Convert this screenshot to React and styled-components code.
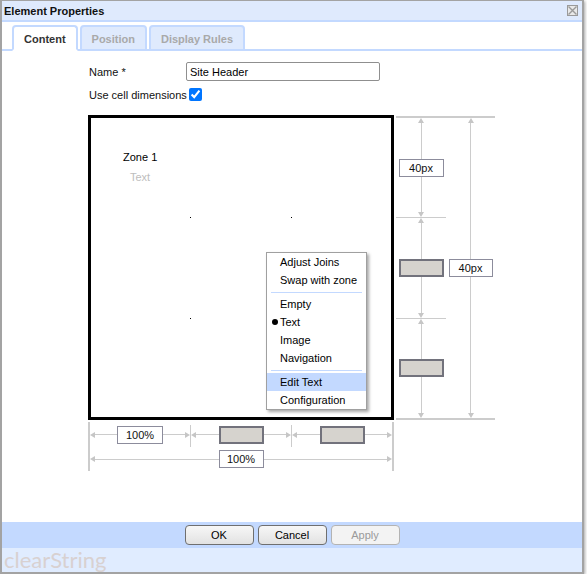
import React from 'react';
import styled, { createGlobalStyle, css } from 'styled-components';

const GlobalStyle = createGlobalStyle`
  html, body {
    margin: 0;
    padding: 0;
    background: #fff;
  }
  body {
    font-family: "Liberation Sans", Arial, sans-serif;
    font-size: 11px;
    color: #000;
  }
  * {
    box-sizing: border-box;
  }
`;

const Dialog = styled.div`
  width: 584px;
  height: 574px;
  display: flex;
  flex-direction: column;
  border: 2px solid #a3a3a3;
  border-top-width: 1px;
  box-shadow: 1px 1px 3px rgba(0, 0, 0, 0.35);
  background: #fff;
`;

const TitleBar = styled.div`
  height: 21px;
  flex: none;
  display: flex;
  align-items: center;
  justify-content: space-between;
  padding: 0 4px 0 2px;
  background: #dfeafd;
  border-bottom: 2px solid #c3d9ff;
  font-weight: bold;
  color: #111;
`;

const TabStrip = styled.div`
  height: 29px;
  flex: none;
  display: flex;
  align-items: flex-end;
  gap: 2px;
  padding-left: 10px;
  border-bottom: 2px solid #c3d9ff;
`;

const Tab = styled.div`
  height: 26px;
  margin-bottom: -2px;
  padding: 1px 10px 0;
  display: flex;
  align-items: center;
  border: 2px solid #c3d9ff;
  border-radius: 4px 4px 0 0;
  font-weight: bold;
  background: #dfeafd;
  color: #a9a9a9;
  ${p =>
    p.$active &&
    css`
      background: #fff;
      border-bottom-color: #fff;
      color: #333;
    `}
`;

const Panel = styled.div`
  flex: 1;
  min-height: 0;
  padding: 11px 0 0 86px;
`;

const Form = styled.div`
  display: grid;
  grid-template-columns: 98px 194px;
  row-gap: 4px;
  align-items: center;
`;

const Label = styled.label`
  padding-left: 1px;
  white-space: nowrap;
  color: #111;
`;

const TextInput = styled.input`
  width: 194px;
  height: 19px;
  border: 1px solid #8f8f8f;
  border-radius: 2px;
  padding: 0 3px;
  font: 11px "Liberation Sans", Arial, sans-serif;
  color: #000;
`;

const Checkbox = styled.input`
  display: block;
  width: 13px;
  height: 13px;
  margin: 3px;
`;

const Editor = styled.div`
  margin-top: 11px;
  display: grid;
  grid-template-columns: 306px 99px;
  grid-template-rows: 305px 49px;
  gap: 2px;
`;

const Canvas = styled.div`
  position: relative;
  border: 3px solid #000;
  padding: 33px 0 0 32px;
  line-height: 13px;
`;

const ZoneTitle = styled.div`
  color: #000;
`;

const ZoneType = styled.div`
  margin: 7px 0 0 7px;
  color: #bdbdbd;
`;

const Dot = styled.span`
  position: absolute;
  left: ${p => p.$x}px;
  top: ${p => p.$y}px;
  width: 1px;
  height: 1px;
  background: #000;
`;

const Menu = styled.div`
  position: absolute;
  left: 175px;
  top: 134px;
  width: 101px;
  border: 1px solid #a0a0a0;
  background: #fff;
  box-shadow: 2px 2px 3px rgba(0, 0, 0, 0.35);
  line-height: 18px;
`;

const MenuItem = styled.div`
  position: relative;
  height: 18px;
  padding-left: 13px;
  white-space: nowrap;
  background: ${p => (p.$highlight ? '#c3d9ff' : 'transparent')};
  ${p =>
    p.$checked &&
    css`
      &::before {
        content: '';
        position: absolute;
        left: 5px;
        top: 6px;
        width: 6px;
        height: 6px;
        border-radius: 50%;
        background: #000;
      }
    `}
`;

const MenuSeparator = styled.div`
  height: 1px;
  margin: 3px 4px 2px;
  background: #c3d9ff;
`;

const SideRuler = styled.div`
  grid-column: 2;
  grid-row: 1;
  margin-top: 1px;
  height: 304px;
  display: flex;
  border-top: 2px solid #ccc;
  border-bottom: 2px solid #ccc;
`;

const RulerColumn = styled.div`
  width: ${p => p.$w}px;
  display: flex;
  flex-direction: column;
`;

const Tick = styled.div`
  flex: none;
  height: 1px;
  background: #ccc;
`;

const VSegment = styled.div`
  flex: 1;
  display: flex;
  flex-direction: column;
  align-items: center;
`;

const VLine = styled.div`
  flex: 1;
  width: 1px;
  background: #ccc;
`;

const BottomRuler = styled.div`
  grid-column: 1;
  grid-row: 2;
  display: flex;
  flex-direction: column;
  border-left: 2px solid #ccc;
  border-right: 2px solid #ccc;
`;

const RulerRow = styled.div`
  height: ${p => p.$h}px;
  display: flex;
  align-items: center;
`;

const HSegment = styled.div`
  flex: 1;
  display: flex;
  align-items: center;
`;

const HLine = styled.div`
  flex: 1;
  height: 1px;
  background: #ccc;
`;

const Separator = styled.div`
  align-self: stretch;
  width: 1px;
  margin-top: 3px;
  background: #ccc;
`;

const arrows = {
  up: css`
    border-width: 0 3px 5px;
    border-bottom-color: #c6c6c6;
  `,
  down: css`
    border-width: 5px 3px 0;
    border-top-color: #c6c6c6;
  `,
  left: css`
    border-width: 3px 5px 3px 0;
    border-right-color: #c6c6c6;
  `,
  right: css`
    border-width: 3px 0 3px 5px;
    border-left-color: #c6c6c6;
  `,
};

const Arrow = styled.span`
  flex: none;
  width: 0;
  height: 0;
  border-style: solid;
  border-color: transparent;
  ${p => arrows[p.$dir]}
`;

const ValueBox = styled.div`
  flex: none;
  width: ${p => p.$w}px;
  height: 18px;
  display: flex;
  align-items: center;
  justify-content: center;
  background: #fff;
  border: 1px solid #8c8c9c;
  color: #111;
`;

const SlotBox = styled.div`
  flex: none;
  width: ${p => p.$w}px;
  height: 18px;
  background: #d6d3ce;
  border: 2px solid #72727c;
`;

const ButtonBar = styled.div`
  height: 26px;
  flex: none;
  display: flex;
  align-items: center;
  justify-content: center;
  gap: 4px;
  background: #c3d9ff;
`;

const Button = styled.button`
  width: 69px;
  height: 20px;
  padding: 0;
  border-radius: 4px;
  border: 1px solid #6f6f6f;
  background: linear-gradient(#f7f7f7, #e2e2e2);
  font: 11px "Liberation Sans", Arial, sans-serif;
  color: #000;
  &:disabled {
    border-color: #b3b3b3;
    background: #f3f3f3;
    color: #9a9a9a;
  }
`;

const BrandBar = styled.div`
  height: 24px;
  flex: none;
  padding-left: 2px;
  background: #e0ecff;
  font-family: Lato, "Open Sans", sans-serif;
  font-size: 22px;
  line-height: 24px;
  color: #d8d1d1;
`;

const CloseIcon = () => (
  <svg width="11" height="11" viewBox="0 0 11 11">
    <rect x="0.5" y="0.5" width="10" height="10" fill="#e9e9e9" stroke="#9a9a9a" />
    <path d="M1.5 1.5L9.5 9.5M9.5 1.5L1.5 9.5" stroke="#9a9a9a" strokeWidth="1.4" />
  </svg>
);

const VMeasure = ({ children }) => (
  <VSegment>
    <Arrow $dir="up" />
    <VLine />
    {children}
    <VLine />
    <Arrow $dir="down" />
  </VSegment>
);

const HMeasure = ({ children }) => (
  <HSegment>
    <Arrow $dir="left" />
    <HLine />
    {children}
    <HLine />
    <Arrow $dir="right" />
  </HSegment>
);

const menuItems = [
  ['Adjust Joins'],
  ['Swap with zone'],
  null,
  ['Empty'],
  ['Text', 'checked'],
  ['Image'],
  ['Navigation'],
  null,
  ['Edit Text', 'highlight'],
  ['Configuration'],
];

const App = () => {
  return (
    <>
      <GlobalStyle />
      <Dialog>
        <TitleBar>
          <span>Element Properties</span>
          <CloseIcon />
        </TitleBar>
        <TabStrip>
          <Tab $active>Content</Tab>
          <Tab>Position</Tab>
          <Tab>Display Rules</Tab>
        </TabStrip>
        <Panel>
          <Form>
            <Label>Name *</Label>
            <TextInput value="Site Header" readOnly />
            <Label>Use cell dimensions</Label>
            <div>
              <Checkbox type="checkbox" checked readOnly />
            </div>
          </Form>
          <Editor>
            <Canvas>
              <ZoneTitle>Zone 1</ZoneTitle>
              <ZoneType>Text</ZoneType>
              <Dot $x={99} $y={99} />
              <Dot $x={200} $y={99} />
              <Dot $x={99} $y={200} />
              <Menu>
                {menuItems.map((item, i) =>
                  item ? (
                    <MenuItem
                      key={i}
                      $checked={item[1] === 'checked'}
                      $highlight={item[1] === 'highlight'}
                    >
                      {item[0]}
                    </MenuItem>
                  ) : (
                    <MenuSeparator key={i} />
                  )
                )}
              </Menu>
            </Canvas>
            <SideRuler>
              <RulerColumn $w={50}>
                <VMeasure>
                  <ValueBox $w={45}>40px</ValueBox>
                </VMeasure>
                <Tick />
                <VMeasure>
                  <SlotBox $w={45} />
                </VMeasure>
                <Tick />
                <VMeasure>
                  <SlotBox $w={45} />
                </VMeasure>
              </RulerColumn>
              <RulerColumn $w={49}>
                <VMeasure>
                  <ValueBox $w={44}>40px</ValueBox>
                </VMeasure>
              </RulerColumn>
            </SideRuler>
            <BottomRuler>
              <RulerRow $h={25}>
                <HMeasure>
                  <ValueBox $w={46}>100%</ValueBox>
                </HMeasure>
                <Separator />
                <HMeasure>
                  <SlotBox $w={45} />
                </HMeasure>
                <Separator />
                <HMeasure>
                  <SlotBox $w={45} />
                </HMeasure>
              </RulerRow>
              <RulerRow $h={24}>
                <HMeasure>
                  <ValueBox $w={45}>100%</ValueBox>
                </HMeasure>
              </RulerRow>
            </BottomRuler>
          </Editor>
        </Panel>
        <ButtonBar>
          <Button>OK</Button>
          <Button>Cancel</Button>
          <Button disabled>Apply</Button>
        </ButtonBar>
        <BrandBar>clearString</BrandBar>
      </Dialog>
    </>
  );
};

export default App;
